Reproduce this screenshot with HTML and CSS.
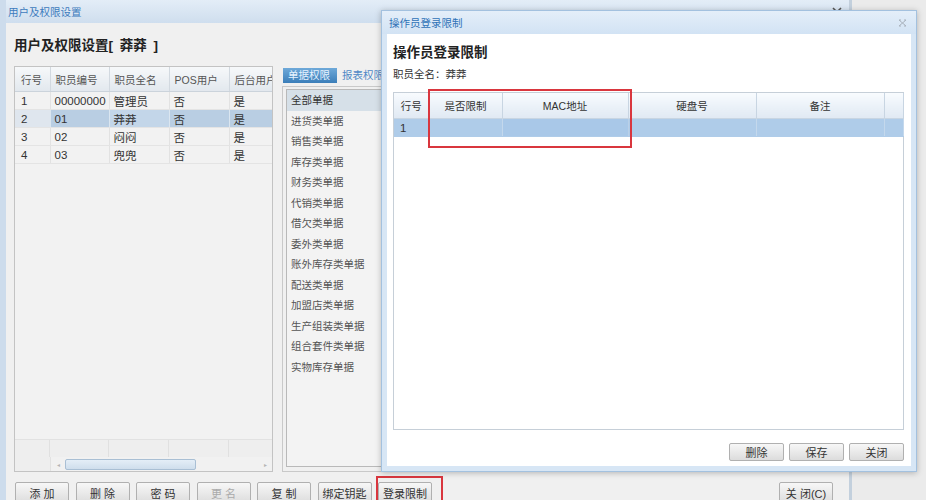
FILE: index.html
```html
<!DOCTYPE html>
<html lang="zh-CN">
<head>
    <meta charset="UTF-8">
    <meta name="viewport" content="width=device-width, initial-scale=1.0">
    <title>用户及权限设置</title>
    <link rel="stylesheet" href="styles.css">
</head>
<body>

<div class="desktop">

    <!-- 主窗口 -->
    <div class="main-win">
        <div class="title-bar">
            <span class="title-text">用户及权限设置</span>
            <svg class="win-close" width="10" height="10" viewBox="0 0 10 10">
                <path d="M1 1 L9 9 M9 1 L1 9" stroke="#555" stroke-width="1.6" fill="none"/>
            </svg>
        </div>

        <div class="main-body">
            <h1 class="page-title">用户及权限设置[ <span class="who">莽莽</span> ]</h1>

            <div class="panes">
                <!-- 职员列表 -->
                <div class="user-grid">
                    <table class="grid-table">
                        <colgroup>
                            <col style="width:35px">
                            <col style="width:59px">
                            <col style="width:60px">
                            <col style="width:60px">
                            <col style="width:60px">
                        </colgroup>
                        <thead>
                            <tr><th class="first">行号</th><th>职员编号</th><th>职员全名</th><th>POS用户</th><th>后台用户</th></tr>
                        </thead>
                        <tbody>
                            <tr><td class="first">1</td><td>00000000</td><td>管理员</td><td>否</td><td>是</td></tr>
                            <tr class="selected"><td class="first">2</td><td>01</td><td class="focus">莽莽</td><td>否</td><td>是</td></tr>
                            <tr><td class="first">3</td><td>02</td><td>闷闷</td><td>否</td><td>是</td></tr>
                            <tr><td class="first">4</td><td>03</td><td>兜兜</td><td>否</td><td>是</td></tr>
                        </tbody>
                    </table>
                    <div class="grid-fill"></div>
                    <div class="grid-foot">
                        <span style="width:35px"></span>
                        <span style="width:59px"></span>
                        <span style="width:60px"></span>
                        <span style="width:60px"></span>
                        <span style="width:60px"></span>
                    </div>
                    <div class="hscroll">
                        <span class="corner"></span>
                        <div class="track">
                            <span class="arrow">&#9666;</span>
                            <span class="thumb"></span>
                            <span class="arrow right">&#9656;</span>
                        </div>
                    </div>
                </div>

                <!-- 权限 -->
                <div class="rights">
                    <div class="tabs">
                        <span class="tab active">单据权限</span>
                        <span class="tab">报表权限</span>
                    </div>
                    <div class="rights-frame">
                        <ul class="bill-list">
                            <li class="selected">全部单据</li>
                            <li>进货类单据</li>
                            <li>销售类单据</li>
                            <li>库存类单据</li>
                            <li>财务类单据</li>
                            <li>代销类单据</li>
                            <li>借欠类单据</li>
                            <li>委外类单据</li>
                            <li>账外库存类单据</li>
                            <li>配送类单据</li>
                            <li>加盟店类单据</li>
                            <li>生产组装类单据</li>
                            <li>组合套件类单据</li>
                            <li>实物库存单据</li>
                        </ul>
                    </div>
                </div>
            </div>

            <div class="toolbar">
                <button class="btn">添 加</button>
                <button class="btn">删 除</button>
                <button class="btn">密 码</button>
                <button class="btn disabled">更 名</button>
                <button class="btn">复 制</button>
                <button class="btn">绑定钥匙</button>
                <span class="marked"><button class="btn">登录限制</button></span>
                <button class="btn btn-close">关 闭(C)</button>
            </div>
        </div>
    </div>

    <!-- 操作员登录限制 对话框 -->
    <div class="dialog">
        <div class="dlg-title">
            <span class="dlg-title-text">操作员登录限制</span>
            <svg class="dlg-close" width="9" height="8" viewBox="0 0 9 8">
                <path d="M1 1 L8 7 M8 1 L1 7 M1 1 L3 1 M6 1 L8 1 M1 7 L3 7 M6 7 L8 7" stroke="#aab3bd" stroke-width="1" fill="none"/>
            </svg>
        </div>
        <div class="dlg-body">
            <h2 class="dlg-heading">操作员登录限制</h2>
            <div class="dlg-info">职员全名：莽莽</div>

            <div class="dlg-grid">
                <table class="grid-table">
                    <colgroup>
                        <col style="width:35px">
                        <col style="width:73px">
                        <col style="width:126px">
                        <col style="width:128px">
                        <col style="width:128px">
                        <col style="width:19px">
                    </colgroup>
                    <thead>
                        <tr><th>行号</th><th>是否限制</th><th>MAC地址</th><th>硬盘号</th><th>备注</th><th></th></tr>
                    </thead>
                    <tbody>
                        <tr class="selected"><td class="first">1</td><td></td><td class="focus"></td><td></td><td></td><td></td></tr>
                    </tbody>
                </table>
                <div class="red-mark"></div>
            </div>

            <div class="dlg-actions">
                <button class="btn small">删除</button>
                <button class="btn small">保存</button>
                <button class="btn small">关闭</button>
            </div>
        </div>
    </div>

</div>

</body>
</html>
```

FILE: styles.css
```css
body {
    margin: 0;
    font-family: "Liberation Sans", "Noto Sans CJK SC", sans-serif;
    background-color: #ebebeb;
}

.desktop {
    position: relative;
    width: 926px;
    height: 500px;
    overflow: hidden;
}

/* 主窗口 */
.main-win {
    width: 843px;
    height: 520px;
    background-color: #f0f0f0;
    border-left: 6px solid #cddcec;
    border-right: 3px solid #c3d0dd;
}

.title-bar {
    height: 23px;
    display: flex;
    align-items: center;
    justify-content: space-between;
    padding: 0 7px 0 2px;
    background: linear-gradient(#e3edf7, #cfdeee);
}

.title-text {
    font-size: 10.5px;
    color: #3d7bbd;
}

.main-body {
    padding: 15px 16px 0 8px;
}

.page-title {
    margin: 0;
    font-size: 13.5px;
    line-height: 16px;
    font-weight: bold;
    color: #222;
}

.page-title .who {
    margin: 0 3px;
}

.panes {
    display: flex;
    gap: 9px;
    height: 406px;
    margin-top: 12px;
}

/* 表格 */
.grid-table {
    border-collapse: collapse;
    table-layout: fixed;
}

.grid-table th {
    height: 24px;
    padding: 0 0 0 5px;
    font-size: 10.5px;
    font-weight: normal;
    color: #555;
    text-align: left;
    white-space: nowrap;
    overflow: hidden;
    background: linear-gradient(#f6f8fa, #e2e8ee);
    border-right: 1px solid #d2d9e0;
    border-bottom: 1px solid #cbd3db;
}

.grid-table th.first {
    padding-left: 6px;
}

.grid-table td {
    height: 17px;
    padding: 0 0 0 4px;
    font-size: 11.5px;
    color: #333;
    white-space: nowrap;
    overflow: hidden;
    border-right: 1px solid #e2e2e2;
    border-bottom: 1px solid #e4e4e4;
}

.grid-table td.first {
    padding-left: 6px;
}

.user-grid {
    width: 257px;
    border: 1px solid #c3c3c3;
    background-color: #f2f2f2;
    display: flex;
    flex-direction: column;
    overflow: hidden;
}

.user-grid .grid-table {
    width: 274px;
}

.user-grid tr.selected td {
    background-color: #b9cee3;
    border-right-color: #dbe6f0;
}

.user-grid tr.selected td.first {
    background-color: #dfe6ee;
}

.user-grid tr.selected td.focus {
    background-color: #c3d6e9;
}

.grid-fill {
    flex: 1;
}

.grid-foot {
    height: 17px;
    display: flex;
    border-top: 1px solid #e2e2e2;
    background-color: #eeeeee;
}

.grid-foot span {
    flex-shrink: 0;
    box-sizing: border-box;
    border-right: 1px solid #e0e0e0;
}

.hscroll {
    height: 14px;
    display: flex;
    background-color: #eeeeee;
}

.hscroll .corner {
    width: 35px;
    flex-shrink: 0;
}

.hscroll .track {
    flex: 1;
    display: flex;
    align-items: center;
    background-color: #f1f1f1;
    border-left: 1px solid #e2e2e2;
}

.hscroll .arrow {
    font-size: 6px;
    color: #b5b5b5;
    width: 14px;
    text-align: center;
}

.hscroll .arrow.right {
    margin-left: auto;
}

.hscroll .thumb {
    width: 131px;
    height: 11px;
    box-sizing: border-box;
    border: 1px solid #a9bfd4;
    border-radius: 2px;
    background: linear-gradient(#e4eef7, #cfdeec);
}

/* 权限 */
.rights {
    flex: 1;
    display: flex;
    flex-direction: column;
}

.tabs {
    height: 20px;
    padding: 2px 0 0 1px;
    box-sizing: border-box;
    display: flex;
    align-items: flex-start;
}

.tab {
    height: 15px;
    line-height: 15px;
    padding: 0 5px;
    font-size: 10.5px;
    color: #4f88c6;
}

.tab.active {
    width: 44px;
    background: linear-gradient(#6ea9d9, #3b7eb9);
    color: #e6f2ff;
}

.rights-frame {
    flex: 1;
    border: 1px solid #c9c9c9;
    padding: 2px 3px 4px 3px;
}

.bill-list {
    margin: 0;
    padding: 0;
    list-style: none;
    height: 100%;
    box-sizing: border-box;
    border: 1px solid #b9b9b9;
    background-color: #f3f3f3;
}

.bill-list li {
    height: 20.5px;
    line-height: 20.5px;
    padding-left: 4px;
    font-size: 10.5px;
    color: #555;
}

.bill-list li.selected {
    background-color: #d6e0e8;
    color: #333;
}

/* 按钮 */
.toolbar {
    display: flex;
    gap: 6.5px;
    margin-top: 10px;
    padding-left: 1px;
}

.btn {
    width: 54px;
    height: 22px;
    padding: 0;
    border: 1px solid #b0b0b0;
    border-radius: 2px;
    background: linear-gradient(#f7f7f7, #dcdcdc);
    font-family: inherit;
    font-size: 11px;
    color: #333;
}

.btn.disabled {
    color: #aaa;
}

.btn-close {
    margin-left: auto;
}

.marked {
    position: relative;
    display: flex;
}

.marked::after {
    content: "";
    position: absolute;
    left: -2px;
    top: -6px;
    width: 67px;
    height: 32px;
    box-sizing: border-box;
    border: 2px solid #d9363e;
}

/* 对话框 */
.dialog {
    position: absolute;
    left: 381px;
    top: 10px;
    width: 534px;
    height: 460px;
    border: 1px solid #a3c1df;
    background-color: #d7e6f5;
    box-shadow: 0 1px 6px rgba(0, 0, 0, 0.25);
    display: flex;
    flex-direction: column;
}

.dlg-title {
    height: 23px;
    display: flex;
    align-items: center;
    justify-content: space-between;
    padding: 0 9px 0 7px;
    background: linear-gradient(#e4eef9, #d2e3f4);
}

.dlg-title-text {
    font-size: 10.5px;
    color: #2f72b7;
}

.dlg-body {
    flex: 1;
    margin: 0 5px 5px;
    padding: 11px 7px 0 6px;
    background-color: #fff;
    display: flex;
    flex-direction: column;
}

.dlg-heading {
    margin: 0;
    font-size: 13.5px;
    line-height: 16px;
    font-weight: bold;
    color: #222;
}

.dlg-info {
    margin-top: 7px;
    font-size: 10.5px;
    line-height: 12px;
    color: #333;
}

.dlg-grid {
    position: relative;
    height: 338px;
    margin-top: 12px;
    box-sizing: border-box;
    border: 1px solid #c6cfd8;
}

.dlg-grid .grid-table {
    width: 509px;
}

.dlg-grid .grid-table th {
    height: 25px;
    padding: 0;
    text-align: center;
    color: #333;
    background: linear-gradient(#f8fbfe, #e0e9f3);
    border-right: 1px solid #c8d5e2;
    border-bottom: 1px solid #c8d5e2;
}

.dlg-grid tr.selected td {
    background-color: #afcce9;
    border-right-color: #c4d8ec;
    border-bottom-color: #afcce9;
}

.dlg-grid tr.selected td.focus {
    background-color: #a9c8e8;
    border-right-color: #b9d0e8;
}

.red-mark {
    position: absolute;
    left: 34px;
    top: -4px;
    width: 204px;
    height: 59px;
    box-sizing: border-box;
    border: 2px solid #d9363e;
}

.dlg-actions {
    display: flex;
    justify-content: flex-end;
    gap: 5px;
    margin-top: 13px;
}

.btn.small {
    width: 55px;
    height: 18px;
}
```
